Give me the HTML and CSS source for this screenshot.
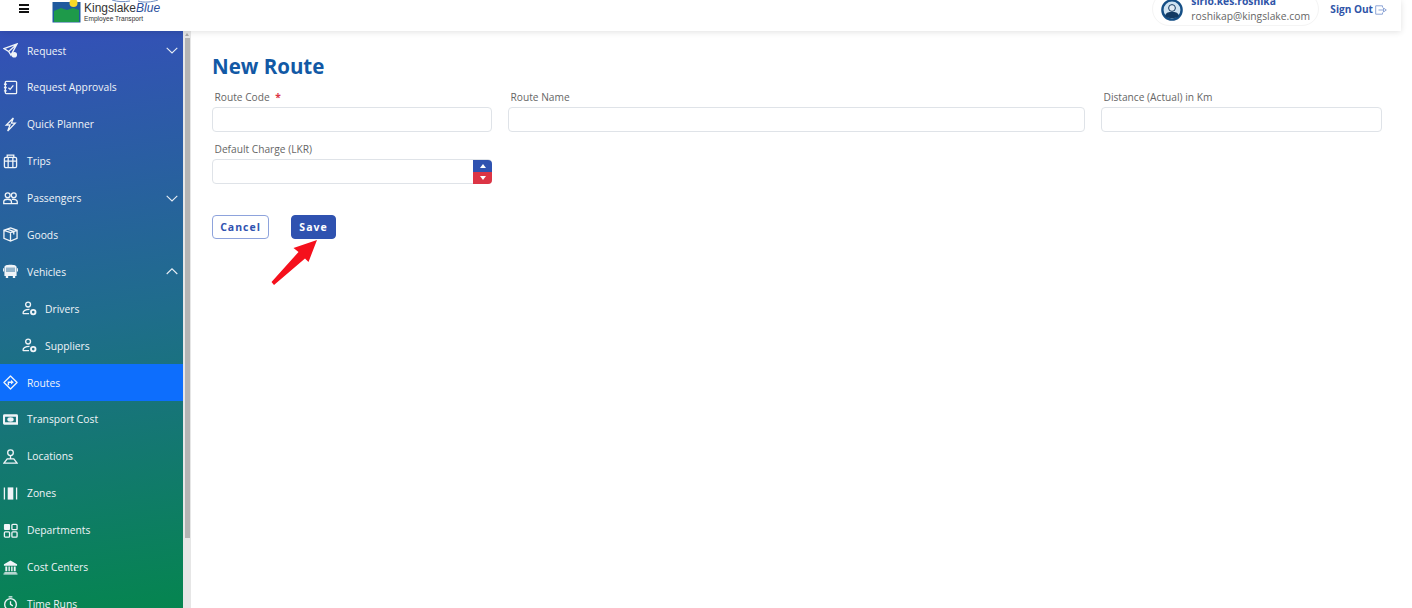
FILE: index.html
```html
<!DOCTYPE html>
<html lang="en">
<head>
  <meta charset="UTF-8" />
  <title>New Route</title>
  <link rel="stylesheet" href="styles.css">
</head>
<body>
  <div class="page">
    <!-- Top bar -->
    <header class="topbar">
      <div class="burger"><span></span><span></span><span></span></div>
      <div class="logo">
        <svg class="logo-mark" viewBox="0 0 30 24" width="30" height="24">
          <rect x="0.5" y="2" width="28" height="20.5" fill="#1f5a9e"/>
          <path d="M2 11 L9 8 L15 10 L21 8 L27 10 V22 H2 Z" fill="#1e9a4a"/>
          <circle cx="21.5" cy="3" r="4" fill="#f7d927"/>
        </svg>
        <svg class="logo-swoosh" viewBox="0 0 50 4" width="50" height="4" fill="none" stroke="#6d8cc4" stroke-width="1">
          <path d="M2 0 C8 2 14 2 20 1 M28 1 C34 3 42 2 48 0"/>
        </svg>
        <div class="logo-text">
          <div class="logo-name">Kingslake<em>Blue</em></div>
          <div class="logo-sub">Employee Transport</div>
        </div>
      </div>
      <div class="spacer"></div>
      <div class="user-pill">
        <svg class="avatar" viewBox="0 0 22 22" width="22" height="22">
          <circle cx="11" cy="11" r="9.6" fill="#cfe3f2" stroke="#154f86" stroke-width="2.4"/>
          <circle cx="11" cy="9" r="3.4" fill="#dfeaf3" stroke="#123a63"/>
          <path d="M4 17 C5 13 8 13 11 13 C14 13 17 13 18 17 C15 20 7 20 4 17 Z" fill="#123a63"/>
        </svg>
        <div class="user-text">
          <div class="user-name">sirio.kes.roshika</div>
          <div class="user-mail">roshikap@kingslake.com</div>
        </div>
      </div>
      <a class="signout">Sign Out
        <svg viewBox="0 0 12 10" width="12" height="10" fill="none" stroke="#8fa6d6" stroke-width="1">
          <path d="M7.5 2.5 V.8 H.7 V9.2 H7.5 V7.5"/>
          <path d="M3.5 5 H8.5 V3 L11.3 5 L8.5 7 V5"/>
        </svg>
      </a>
    </header>

    <div class="main">
      <!-- Side menu -->
      <nav class="sidenav">
        <div class="nav-item">
          <svg class="ico" viewBox="0 0 16 16"><path d="M15 1 L1 6 L6 9 L8.5 13 Z M6 9 L15 1"/><circle class="solid" cx="12" cy="12.5" r="3"/></svg>
          <span>Request</span>
          <svg class="chev" viewBox="0 0 12 7"><path d="M.7 .8 L6 6 L11.3 .8"/></svg>
        </div>
        <div class="nav-item">
          <svg class="ico" viewBox="0 0 16 16"><rect x="2.5" y="1.5" width="12" height="13" rx="1"/><path d="M5.8 8.3 L7.6 10 L11 5.8 M1 4.5 H4 M1 8 H4 M1 11.5 H4"/></svg>
          <span>Request Approvals</span>
        </div>
        <div class="nav-item">
          <svg class="ico" viewBox="0 0 16 16"><path d="M11 1 L3.5 8.5 H7.5 L5 15 L13 6.5 H9 Z"/></svg>
          <span>Quick Planner</span>
        </div>
        <div class="nav-item">
          <svg class="ico" viewBox="0 0 16 16"><rect x="1.5" y="3.5" width="13" height="11" rx="1.5"/><path d="M4.5 3.5 V1.2 H11.5 V3.5 M1.5 7.5 H14.5 M5.5 3.5 V14.5 M10.5 3.5 V14.5"/></svg>
          <span>Trips</span>
        </div>
        <div class="nav-item">
          <svg class="ico" viewBox="0 0 16 16"><circle cx="5" cy="4.5" r="2.6"/><circle cx="11.5" cy="4.5" r="2.6"/><path d="M.8 13.5 V11.5 C.8 9.5 3 8.8 5 8.8 C7 8.8 9 9.5 9 11.5 V13.5 Z M9.5 9 C12 8.4 15.2 9.2 15.2 11.5 V13.5 H9"/></svg>
          <span>Passengers</span>
          <svg class="chev" viewBox="0 0 12 7"><path d="M.7 .8 L6 6 L11.3 .8"/></svg>
        </div>
        <div class="nav-item">
          <svg class="ico" viewBox="0 0 16 16"><path d="M8 1 L15 3.5 V12 L8 15 L1 12 V3.5 Z M1 3.5 L8 6 L15 3.5 M8 6 V15 M4.5 2.3 L11.5 4.8 V8"/></svg>
          <span>Goods</span>
        </div>
        <div class="nav-item">
          <svg class="ico" viewBox="0 0 16 16"><path class="solid" d="M1.5 3.5 C1.5 1.5 4 .8 8 .8 C12 .8 14.5 1.5 14.5 3.5 V12.8 H13 V15 H10.5 V12.8 H5.5 V15 H3 V12.8 H1.5 Z M3.2 4 V8.5 H12.8 V4 Z M0 4.5 H1 V8 H0 Z M15 4.5 H16 V8 H15 Z"/><rect class="solid faint" x="3.2" y="4" width="9.6" height="4.5"/></svg>
          <span>Vehicles</span>
          <svg class="chev" viewBox="0 0 12 7"><path d="M.7 6 L6 .8 L11.3 6"/></svg>
        </div>
        <div class="nav-item sub">
          <svg class="ico" viewBox="0 0 16 16"><circle cx="6.5" cy="3.8" r="2.6"/><path d="M1 13.5 C1 10 4 9 8 9 M1 13.5 H7.5"/><circle class="ring" cx="12" cy="11.8" r="2.4"/></svg>
          <span>Drivers</span>
        </div>
        <div class="nav-item sub">
          <svg class="ico" viewBox="0 0 16 16"><circle cx="6.5" cy="3.8" r="2.6"/><path d="M1 13.5 C1 10 4 9 8 9 M1 13.5 H7.5"/><circle class="ring" cx="12" cy="11.8" r="2.4"/></svg>
          <span>Suppliers</span>
        </div>
        <div class="nav-item active">
          <svg class="ico" viewBox="0 0 16 16"><path d="M8 1 L15 8 L8 15 L1 8 Z" stroke-linejoin="round"/><path class="solid" d="M5 11 V7 H8.5 V5 L11.5 7.8 L8.5 10 V8.5 H6.5 V11 Z"/></svg>
          <span>Routes</span>
        </div>
        <div class="nav-item">
          <svg class="ico" viewBox="0 0 16 16"><path class="solid" d="M1.5 2.5 H14.5 Q16 2.5 16 4 V13.5 H1.5 Q0 13.5 0 12 V4 Q0 2.5 1.5 2.5 Z M2.2 5 V11 H13.8 V5 Z"/><ellipse class="solid" cx="8" cy="8" rx="3.4" ry="2.4"/></svg>
          <span>Transport Cost</span>
        </div>
        <div class="nav-item">
          <svg class="ico" viewBox="0 0 16 16"><circle cx="8" cy="4" r="3"/><path d="M8 7 V11 M4.5 10.5 H11.5 L15 15 H1 Z"/></svg>
          <span>Locations</span>
        </div>
        <div class="nav-item">
          <svg class="ico" viewBox="0 0 16 16"><path d="M1.5 1.5 V14.5 M14.5 1.5 V14.5"/><rect class="solid" x="5" y="1.5" width="6" height="13"/></svg>
          <span>Zones</span>
        </div>
        <div class="nav-item">
          <svg class="ico" viewBox="0 0 16 16"><rect class="solid" x="1" y="1" width="6.5" height="6.5" rx="1"/><rect x="9.5" y="1.5" width="5.5" height="5.5" rx="1"/><rect x="1.5" y="9.5" width="5.5" height="5.5" rx="1"/><rect x="9.5" y="9.5" width="5.5" height="5.5" rx="1"/></svg>
          <span>Departments</span>
        </div>
        <div class="nav-item">
          <svg class="ico" viewBox="0 0 16 16"><path class="solid" d="M8 .5 L15 4.5 V6 H1 V4.5 Z M2.5 7 H4.5 V12 H2.5 Z M5.8 7 H7.3 V12 H5.8 Z M8.7 7 H10.2 V12 H8.7 Z M11.5 7 H13.5 V12 H11.5 Z M1.5 13 H14.5 V14 H1.5 Z M.5 14.5 H15.5 V15.5 H.5 Z"/></svg>
          <span>Cost Centers</span>
        </div>
        <div class="nav-item">
          <svg class="ico" viewBox="0 0 16 16"><circle cx="8" cy="9" r="6.2"/><path d="M8 5.5 V9 L10.5 10.5 M6 1 H10"/></svg>
          <span>Time Runs</span>
        </div>
      </nav>
      <div class="side-scroll"><div class="side-thumb"></div></div>

      <!-- Form -->
      <main class="content">
        <h1>New Route</h1>
        <form class="route-form">
          <div class="field">
            <label>Route Code <b>*</b></label>
            <input type="text" />
          </div>
          <div class="field">
            <label>Route Name</label>
            <input type="text" />
          </div>
          <div class="field">
            <label>Distance (Actual) in Km</label>
            <input type="text" />
          </div>
          <div class="field">
            <label>Default Charge (LKR)</label>
            <div class="num-input">
              <input type="text" />
              <div class="spin">
                <div class="spin-up"></div>
                <div class="spin-down"></div>
              </div>
            </div>
          </div>
        </form>
        <div class="actions">
          <button class="btn-cancel" type="button">Cancel</button>
          <button class="btn-save" type="button">Save</button>
          <svg class="arrow" viewBox="0 0 52 48" width="52" height="48">
            <path d="M48 2 L39.5 24 L36 20.5 L5 47 L2.5 44 L29.5 14 L24.5 10 Z" fill="#f5101c"/>
          </svg>
        </div>
      </main>
    </div>
  </div>
</body>
</html>
```
FILE: styles.css
```css
* {
  box-sizing: border-box;
}
html, body {
  margin: 0;
  height: 100%;
  background: #fff;
  overflow: hidden;
}
body {
  font-family: "Open Sans", Arial, sans-serif;
}
.page {
  width: 1401px;
  height: 608px;
  display: flex;
  flex-direction: column;
}

/* Top bar */
.topbar {
  height: 31px;
  flex: none;
  display: flex;
  align-items: flex-end;
  padding: 0 14px 0 19px;
  overflow: hidden;
  box-shadow: 0 1px 6px rgba(0, 0, 0, 0.12);
  position: relative;
  z-index: 2;
  background: #fff;
}
.burger {
  width: 10px;
  align-self: flex-start;
  margin-top: 4px;
  display: flex;
  flex-direction: column;
  gap: 1.5px;
}
.burger span {
  height: 2px;
  background: #111;
}
.logo {
  display: flex;
  align-self: flex-start;
  margin-left: 23px;
  position: relative;
}
.logo-mark {
  display: block;
}
.logo-swoosh {
  position: absolute;
  left: 58px;
  top: 0;
}
.logo-text {
  margin-left: 2px;
  margin-top: 1px;
  color: #333;
}
.logo-name {
  font-family: "Liberation Sans", Arial, sans-serif;
  font-size: 12px;
  line-height: 14px;
}
.logo-name em {
  color: #2a4f9c;
}
.logo-sub {
  font-family: "Liberation Sans", Arial, sans-serif;
  font-size: 6.6px;
  line-height: 8px;
  margin-top: 0;
}
.spacer {
  flex: 1;
}
.user-pill {
  width: 167px;
  height: 34px;
  margin-bottom: 5px;
  display: flex;
  align-items: center;
  gap: 8px;
  padding-left: 8px;
  border: 1px solid #f4f4f4;
  border-radius: 17px;
}
.avatar {
  flex: none;
  margin-top: 2px;
}
.user-name {
  font-size: 10.3px;
  font-weight: 700;
  line-height: 13px;
  color: #2f55a8;
}
.user-mail {
  font-size: 10.3px;
  line-height: 16px;
  color: #666;
}
.signout {
  align-self: flex-start;
  margin: 3px 0 0 11px;
  display: flex;
  align-items: center;
  gap: 2px;
  font-size: 10.1px;
  font-weight: 700;
  line-height: 13px;
  color: #2f55a8;
}

/* Side menu */
.main {
  flex: 1;
  display: flex;
  min-height: 0;
}
.sidenav {
  width: 183px;
  flex: none;
  overflow: hidden;
  padding-top: 1.1px;
  background: linear-gradient(172deg, #3450b8 0%, #1f6d8c 50%, #05854f 100%);
}
.nav-item {
  height: 36.9px;
  display: flex;
  align-items: center;
  padding: 0 5px 0 3px;
  font-size: 10.3px;
  color: #f0f4f8;
}
.nav-item.sub {
  padding-left: 22px;
}
.nav-item.sub span {
  margin-left: 8px;
}
.nav-item.active {
  background: #0d6efd;
}
.nav-item span {
  flex: 1;
  margin-left: 9px;
}
.ico {
  width: 15px;
  height: 15px;
  flex: none;
  fill: none;
  stroke: #f0f4f8;
  stroke-width: 1.4;
}
.ico .solid {
  fill: #f0f4f8;
  stroke: none;
  fill-rule: evenodd;
}
.ico .faint {
  opacity: 0.55;
}
.ico .ring {
  stroke-width: 2;
}
.chev {
  width: 12px;
  height: 7px;
  flex: none;
  fill: none;
  stroke: #e8eef5;
  stroke-width: 1.1;
}
.side-scroll {
  width: 8px;
  flex: none;
  background: #e6e6e6;
  padding-top: 7px;
  position: relative;
}
.side-scroll::before {
  content: "";
  position: absolute;
  top: 2px;
  left: 1.5px;
  border: 2.5px solid transparent;
  border-top: 0;
  border-bottom: 3px solid #a8a8a8;
}
.side-thumb {
  height: 500px;
  margin-left: 1.5px;
  width: 5px;
  background: #b4b4b4;
}

/* Form */
.content {
  flex: 1;
  padding: 22px 20px 0 21px;
}
h1 {
  margin: 0;
  font-size: 20.5px;
  line-height: 26px;
  font-weight: 700;
  color: #1259a5;
}
.route-form {
  margin-top: 11px;
  display: grid;
  grid-template-columns: 280px 577px 280.5px;
  column-gap: 16px;
  row-gap: 10.5px;
}
.field label {
  display: block;
  height: 17px;
  padding-left: 2.5px;
  font-size: 10.2px;
  line-height: 14px;
  color: #666;
}
.field label b {
  color: #dc3545;
  font-weight: 700;
  margin-left: 3px;
}
.field input {
  display: block;
  width: 100%;
  height: 24.5px;
  border: 1px solid #dfe3e8;
  border-radius: 4px;
  background: #fff;
  outline: none;
}
.num-input {
  position: relative;
}
.spin {
  position: absolute;
  top: 0.5px;
  right: 0;
  width: 19px;
  height: 24px;
  border-radius: 0 4px 4px 0;
  overflow: hidden;
  display: flex;
  flex-direction: column;
}
.spin-up, .spin-down {
  flex: 1;
  display: flex;
  align-items: center;
  justify-content: center;
}
.spin-up {
  background: #2f52b0;
}
.spin-down {
  background: #dc3545;
}
.spin-up::after {
  content: "";
  border: 3px solid transparent;
  border-top: 0;
  border-bottom: 4px solid #fff;
}
.spin-down::after {
  content: "";
  border: 3px solid transparent;
  border-bottom: 0;
  border-top: 4px solid #fff;
}
.actions {
  margin-top: 31.5px;
  display: flex;
  gap: 22px;
  position: relative;
}
.actions button {
  height: 24px;
  padding: 0;
  border-radius: 4px;
  font-family: inherit;
  font-size: 10.5px;
  font-weight: 700;
  letter-spacing: 1px;
}
.btn-cancel {
  width: 57px;
  background: #fff;
  border: 1px solid #8ea3dc;
  color: #2f52b0;
}
.btn-save {
  width: 45px;
  background: #2f52b0;
  border: 1px solid #2f52b0;
  color: #fff;
}
.arrow {
  position: absolute;
  left: 57px;
  top: 23px;
  filter: blur(0.5px);
}
```
